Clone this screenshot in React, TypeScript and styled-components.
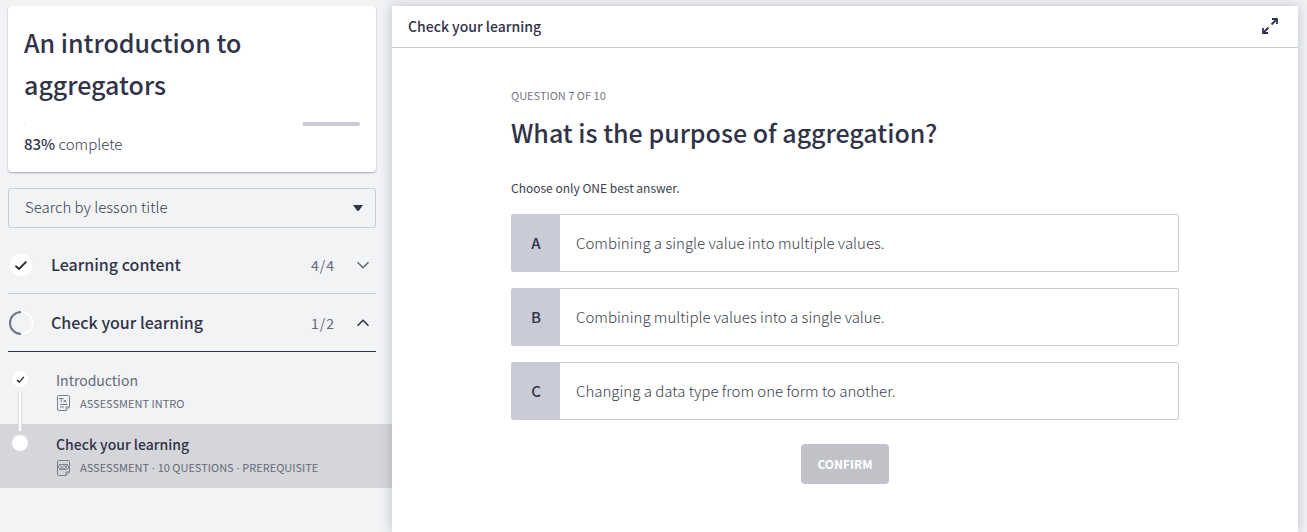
import React, { useState } from "react";
import styled, { createGlobalStyle } from "styled-components";

const ink = "#313348";
const text = "#3b3e4d";
const muted = "#66687a";
const line = "#c9cbd6";

const GlobalStyle = createGlobalStyle`
  *, *::before, *::after { box-sizing: border-box; }
  body {
    margin: 0;
    background: #f1f3f5;
    color: ${text};
    font-family: "Noto Sans CJK SC", "Noto Sans", sans-serif;
    font-size: 14px;
    line-height: 24px;
  }
  h1, h2, p, ul { margin: 0; padding: 0; }
  ul { list-style: none; }
  button, select { font: inherit; color: inherit; }
`;

const Page = styled.div`
  display: grid;
  grid-template-columns: 392px minmax(0, 1fr);
  min-height: 100vh;
  padding: 6px 9px 0 0;
  overflow: hidden;
`;

const Sidebar = styled.aside`
  display: flex;
  flex-direction: column;
`;

const SidebarTop = styled.div`
  display: flex;
  flex-direction: column;
  padding: 0 16px 8px 8px;
`;

const CourseCard = styled.section`
  padding: 15px 16px 16px;
  border-radius: 4px;
  background: #fff;
  box-shadow: 0 1px 2px rgba(40, 42, 60, 0.4);
`;

const CourseTitle = styled.h1`
  color: ${ink};
  font-size: 25px;
  font-weight: 500;
  line-height: 42px;
`;

const ProgressTrack = styled.div`
  height: 4px;
  margin: 17px 0 6px;
  border-radius: 2px;
  background: ${line};
  overflow: hidden;
`;

const ProgressFill = styled.div`
  height: 100%;
  background: #fff;
`;

const ProgressText = styled.p`
  font-size: 15px;
  font-weight: 300;
`;

const Strong = styled.span`
  color: ${ink};
  font-weight: 500;
`;

const SearchBox = styled.div`
  display: grid;
  align-items: center;
  margin: 16px 0 8px;
  > * { grid-area: 1 / 1; }
  > svg { justify-self: end; margin-right: 13px; pointer-events: none; }
`;

const SearchSelect = styled.select`
  width: 100%;
  height: 40px;
  padding: 0 16px 2px;
  border: 1px solid ${line};
  border-radius: 3px;
  background: transparent;
  font-size: 15px;
  font-weight: 300;
  appearance: none;
`;

const SectionHeader = styled.button<{ $open?: boolean }>`
  display: grid;
  grid-template-columns: 26px 1fr auto 16px;
  align-items: center;
  height: 58px;
  padding: 0 5px 0 0;
  border: 0;
  border-bottom: 1px solid ${(p) => (p.$open ? ink : line)};
  background: transparent;
  text-align: left;
  color: ${(p) => (p.$open ? ink : muted)};
`;

const SectionTitle = styled.span`
  padding: 0 0 2px 17px;
  color: ${ink};
  font-size: 16px;
  font-weight: 500;
`;

const SectionCount = styled.span`
  display: flex;
  gap: 1px;
  margin-right: 21px;
  color: ${muted};
`;

const Lesson = styled.a<{ $current?: boolean }>`
  display: grid;
  grid-template-columns: 40px 1fr;
  column-gap: 16px;
  height: 64px;
  background: ${(p) => (p.$current ? "#d5d6da" : "transparent")};
  color: ${muted};
  text-decoration: none;
`;

const Timeline = styled.span`
  display: flex;
  flex-direction: column;
  align-items: center;
  gap: 4px;
`;

const Connector = styled.span<{ $visible?: boolean; $grow?: boolean }>`
  width: 4px;
  height: 7px;
  flex: ${(p) => (p.$grow ? "1" : "none")};
  border: solid #dcdde1;
  border-width: 0 1px;
  background: #fff;
  visibility: ${(p) => (p.$visible ? "visible" : "hidden")};
`;

const Dot = styled.span`
  display: flex;
  align-items: center;
  justify-content: center;
  width: 16px;
  height: 16px;
  border-radius: 50%;
  background: #fff;
`;

const LessonText = styled.span`
  display: flex;
  flex-direction: column;
  padding-top: 8px;
`;

const LessonTitle = styled.span<{ $current?: boolean }>`
  color: ${(p) => (p.$current ? ink : muted)};
  font-weight: ${(p) => (p.$current ? 500 : 400)};
`;

const LessonMeta = styled.span`
  display: flex;
  align-items: center;
  gap: 9px;
  font-size: 11px;
  line-height: 22px;
`;

const Separator = styled.span`
  font-family: "Open Sans", sans-serif;
`;

const Panel = styled.main`
  display: flex;
  flex-direction: column;
  background: #fff;
  box-shadow: 0 0 12px rgba(40, 42, 50, 0.25);
`;

const PanelHeader = styled.header`
  display: flex;
  align-items: center;
  justify-content: space-between;
  height: 42px;
  padding: 0 19px 2px 16px;
  border-bottom: 1px solid ${line};
`;

const PanelTitle = styled.h2`
  color: ${ink};
  font-size: 14px;
  font-weight: 500;
`;

const IconButton = styled.button`
  display: flex;
  padding: 0;
  border: 0;
  background: transparent;
`;

const Question = styled.form`
  display: flex;
  flex-direction: column;
  width: 100%;
  max-width: 668px;
  margin: 0 auto;
  padding: 35px 0 48px;
`;

const QuestionNumber = styled.p`
  color: #74767f;
  font-size: 11px;
`;

const QuestionTitle = styled.h2`
  margin: 4px 0 23px;
  color: ${ink};
  font-size: 25px;
  font-weight: 500;
  line-height: 42px;
`;

const Hint = styled.p`
  font-size: 12px;
`;

const Answers = styled.div`
  display: flex;
  flex-direction: column;
  gap: 16px;
  margin: 14px 0 24px;
`;

const Answer = styled.label`
  display: flex;
  height: 58px;
  border: 1px solid ${line};
  border-radius: 2px;
  cursor: pointer;
`;

const AnswerRadio = styled.input`
  width: 0;
  height: 0;
  margin: 0;
  appearance: none;
`;

const AnswerLetter = styled.span`
  display: flex;
  align-items: center;
  justify-content: center;
  width: 48px;
  background: ${line};
  color: ${ink};
  font-size: 15px;
  font-weight: 500;
`;

const AnswerText = styled.span`
  align-self: center;
  padding: 0 16px;
  font-size: 15px;
  font-weight: 300;
`;

const ConfirmButton = styled.button`
  align-self: center;
  width: 88px;
  height: 40px;
  border: 0;
  border-radius: 4px;
  background: #c1c2c8;
  color: #fff;
  font-size: 12px;
  font-weight: 700;
`;

const Check = ({ size }: { size: number }) => (
  <svg width={size} height={size} viewBox="0 0 14 14" fill="none" stroke="#222" strokeWidth="2">
    <path d="M1.5 7.8 5 11 12.3 3" />
  </svg>
);

const Chevron = ({ up }: { up?: boolean }) => (
  <svg width="16" height="16" viewBox="0 0 16 16" fill="none" stroke="currentColor" strokeWidth="1.6">
    <path d={up ? "M2.5 10.8 8 5.3l5.5 5.5" : "M2.500 5.2 8 10.7l5.500-5.500"} />
  </svg>
);

const DoneBadge = () => (
  <svg width="26" height="26" viewBox="0 0 26 26">
    <circle cx="13" cy="13" r="12" fill="#fff" stroke="#e6e7ea" strokeWidth=".5" />
    <path d="M7.500 13.8 11 17 18.3 9.700" fill="none" stroke="#222" strokeWidth="1.800" />
  </svg>
);

const HalfBadge = () => (
  <svg width="26" height="26" viewBox="0 0 26 26" fill="none">
    <path d="M14 1.200a11.800 11.800 0 0 1 0 23.600" stroke="#d4d5da" strokeWidth="1" />
    <path d="M14 2a11 11 0 0 1 0 22" stroke="#fff" strokeWidth="2" />
    <path d="M13 2a11 11 0 0 0 0 22" stroke="#717386" strokeWidth="2" />
  </svg>
);

const DocIcon = ({ quiz }: { quiz?: boolean }) => (
  <svg width="15" height="16" viewBox="0 0 15 16" fill="none" stroke="#7b7d8d" strokeWidth="1">
    <path d="M3 .5h9.500q1 0 1 1V12L10 15.500H3q-1.500 0-1.500-1.500V2Q1.500.5 3 .5ZM10 15.500V12h3.500" />
    {quiz ? (
      <path d="M2 7l1.500-2L6 7.500 4 9ZM6 7.500 8.500 5l1.500 2-2 2ZM10 7l1.500-2 1.500 2-1.500 2ZM3 4.500h9M3 9.500h8" strokeWidth=".9" />
    ) : (
      <path d="M3 3.500h4.500M5.200 3.500V7.500M7.500 4.800l2.600 2.700M10.100 4.800l-2.600 2.700M4 9.500h7.500M4 12h4" />
    )}
  </svg>
);

const ExpandIcon = () => (
  <svg width="18" height="18" viewBox="0 0 18 18" fill="none" stroke={ink} strokeWidth="1.800">
    <path d="M11 2h5v5M16 2l-5.500 5.500M7 16H2v-5M2 16l5.500-5.500" />
  </svg>
);

const answers = [
  ["A", "Combining a single value into multiple values."],
  ["B", "Combining multiple values into a single value."],
  ["C", "Changing a data type from one form to another."],
];

const Count = ({ done, total }: { done: number; total: number }) => (
  <SectionCount>
    <span>{done}</span>
    <span>/</span>
    <span>{total}</span>
  </SectionCount>
);

export default function App() {
  const [choice, setChoice] = useState("");
  const progress = 83;

  return (
    <>
      <GlobalStyle />
      <Page>
        <Sidebar>
          <SidebarTop>
            <CourseCard>
              <CourseTitle>An introduction to aggregators</CourseTitle>
              <ProgressTrack role="progressbar" aria-label="Course progress" aria-valuenow={progress}>
                <ProgressFill style={{ width: `${progress}%` }} />
              </ProgressTrack>
              <ProgressText>
                <Strong>{progress}%</Strong> complete
              </ProgressText>
            </CourseCard>
            <SearchBox>
              <SearchSelect aria-label="Search by lesson title">
                <option>Search by lesson title</option>
              </SearchSelect>
              <svg width="10" height="6" viewBox="0 0 10 6" fill={ink}>
                <path d="M0 0h10L6 5.500q-1 .8-2 0Z" />
              </svg>
            </SearchBox>
            <SectionHeader type="button" aria-expanded={false}>
              <DoneBadge />
              <SectionTitle>Learning content</SectionTitle>
              <Count done={4} total={4} />
              <Chevron />
            </SectionHeader>
            <SectionHeader type="button" aria-expanded $open>
              <HalfBadge />
              <SectionTitle>Check your learning</SectionTitle>
              <Count done={1} total={2} />
              <Chevron up />
            </SectionHeader>
          </SidebarTop>
          <ul>
            <li>
              <Lesson href="#introduction">
                <Timeline>
                  <Connector />
                  <Dot>
                    <Check size={9} />
                  </Dot>
                  <Connector $visible $grow />
                </Timeline>
                <LessonText>
                  <LessonTitle>Introduction</LessonTitle>
                  <LessonMeta>
                    <DocIcon />
                    ASSESSMENT INTRO
                  </LessonMeta>
                </LessonText>
              </Lesson>
            </li>
            <li>
              <Lesson href="#check" aria-current="page" $current>
                <Timeline>
                  <Connector $visible />
                  <Dot />
                </Timeline>
                <LessonText>
                  <LessonTitle $current>Check your learning</LessonTitle>
                  <LessonMeta>
                    <DocIcon quiz />
                    <span>
                      ASSESSMENT<Separator> · </Separator>10 QUESTIONS<Separator> · </Separator>PREREQUISITE
                    </span>
                  </LessonMeta>
                </LessonText>
              </Lesson>
            </li>
          </ul>
        </Sidebar>
        <Panel>
          <PanelHeader>
            <PanelTitle>Check your learning</PanelTitle>
            <IconButton type="button" aria-label="Full screen">
              <ExpandIcon />
            </IconButton>
          </PanelHeader>
          <Question>
            <QuestionNumber>QUESTION 7 OF 10</QuestionNumber>
            <QuestionTitle>What is the purpose of aggregation?</QuestionTitle>
            <Hint>Choose only ONE best answer.</Hint>
            <Answers role="radiogroup" aria-label="Answers">
              {answers.map(([letter, label]) => (
                <Answer key={letter}>
                  <AnswerRadio
                    type="radio"
                    name="answer"
                    value={letter}
                    checked={choice === letter}
                    onChange={() => setChoice(letter)}
                  />
                  <AnswerLetter>{letter}</AnswerLetter>
                  <AnswerText>{label}</AnswerText>
                </Answer>
              ))}
            </Answers>
            <ConfirmButton type="button" disabled={!choice}>
              CONFIRM
            </ConfirmButton>
          </Question>
        </Panel>
      </Page>
    </>
  );
}
